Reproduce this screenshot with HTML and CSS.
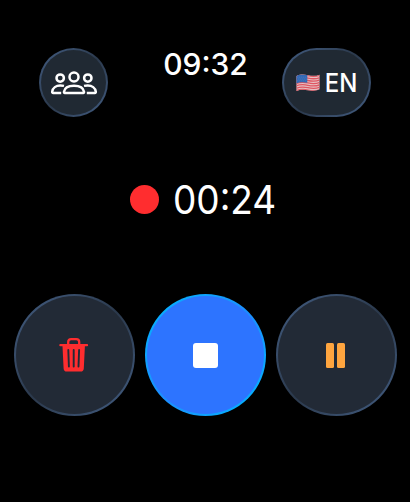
FILE: index.html
```
<!DOCTYPE html>
<html lang="en">
<head>
  <meta charset="UTF-8">
  <meta name="viewport" content="width=device-width, initial-scale=1.0">
  <title>Recorder</title>
  <link rel="stylesheet" href="styles.css">
</head>
<body>
  <div class="watch">
    <header class="top-bar">
      <button class="btn btn-speakers" aria-label="Speakers">
        <svg width="48" height="24" viewBox="0 0 48 24" fill="none" stroke="#fff" stroke-width="2.5" stroke-linejoin="round">
          <circle cx="24" cy="6" r="4.500"/>
          <path d="M14.800 22c-.7 0-.9-.5-.8-1.200.6-4 4.400-6 10-6s9.400 2 10 6c.1.700-.1 1.200-.8 1.200z"/>
          <circle cx="10.200" cy="7.100" r="3.700"/>
          <circle cx="37.800" cy="7.100" r="3.700"/>
          <path d="M14 14.900c-1.200-.3-2.500-.4-3.800-.4-4.200 0-7.400 2.400-8 6.100-.1.900.2 1.400 1 1.400h8"/>
          <path d="M34 14.900c1.200-.3 2.500-.4 3.800-.4 4.200 0 7.400 2.400 8 6.100.1.900-.2 1.400-1 1.400h-8"/>
        </svg>
      </button>
      <div class="clock">09:32</div>
      <button class="btn btn-lang">
        <svg class="flag" width="24" height="18" viewBox="0 0 24 18">
          <defs>
            <clipPath id="wave">
              <path d="M.5 2C4 .2 8 .3 12 1.200s8 1 11.500-.5v14.600c-3.500 1.700-7.500 1.600-11.500.9S4 15.300.5 17z"/>
            </clipPath>
          </defs>
          <g clip-path="url(#wave)">
            <rect width="24" height="18" fill="#e8bfc3"/>
            <g fill="none" stroke="#df5762" stroke-width="1.300">
              <path d="M0 2.400C4 .700 8 .800 12 1.700s8 1 12-.6"/>
              <path d="M0 4.800c4-1.700 8-1.600 12-.7s8 1 12-.6"/>
              <path d="M0 7.200c4-1.700 8-1.600 12-.7s8 1 12-.6"/>
              <path d="M0 9.600c4-1.700 8-1.600 12-.7s8 1 12-.6"/>
              <path d="M0 12c4-1.700 8-1.600 12-.7s8 1 12-.6"/>
              <path d="M0 14.400c4-1.700 8-1.600 12-.7s8 1 12-.6"/>
              <path d="M0 16.800c4-1.700 8-1.600 12-.7s8 1 12-.6"/>
            </g>
            <path d="M0 1.500C4 0 8 .200 11.300 1v7.800C8 8 4 7.900 0 9.500z" fill="#3268b4"/>
            <g stroke="#6f97cf" stroke-width=".6" stroke-dasharray=".7 1.300">
              <path d="M1.500 3.200h9.500M2.500 5h8.500M1.500 6.800h9.500"/>
            </g>
          </g>
        </svg>
        <span class="lang-code">EN</span>
      </button>
    </header>

    <div class="timer">
      <span class="rec-dot"></span>
      <span class="elapsed">00:24</span>
    </div>

    <div class="controls">
      <button class="btn btn-round" aria-label="Delete">
        <svg class="trash" width="30" height="36" viewBox="0 0 30 36">
          <path d="M9.200 8V5c0-1.900 1-2.900 2.900-2.900h5.200c1.900 0 2.900 1 2.900 2.900v3" fill="none" stroke="#ff2d2f" stroke-width="2.300"/>
          <path d="M1.300 7.100h26.800a1 1 0 0 1 0 2.100h-2.200l-1.100 22.300c-.1 2.100-1.200 3.100-3.200 3.100H7.800c-2 0-3.100-1-3.200-3.100L3.500 9.200H1.300a1 1 0 0 1 0-2.100z" fill="#ff2d2f"/>
          <path d="M9.300 13l.6 16.500M14.700 13v16.500M20.100 13l-.6 16.500" fill="none" stroke="#222a36" stroke-width="1.900" stroke-linecap="round"/>
        </svg>
      </button>
      <button class="btn btn-round btn-stop" aria-label="Stop">
        <span class="stop-icon"></span>
      </button>
      <button class="btn btn-round" aria-label="Pause">
        <span class="pause-icon"></span>
      </button>
    </div>
  </div>
</body>
</html>
```
FILE: styles.css
```
* {
  box-sizing: border-box;
}
body {
  margin: 0;
  background: #000;
  color: #fff;
  font-family: Inter, "Liberation Sans", sans-serif;
}
.watch {
  width: 410px;
  height: 502px;
  padding: 48px 14px 0;
  overflow: hidden;
}
.top-bar {
  display: flex;
  justify-content: space-between;
  height: 69px;
  padding: 0 25px;
}
.btn {
  display: flex;
  align-items: center;
  justify-content: center;
  padding: 0;
  border: 2px solid transparent;
  color: #fff;
  font-family: inherit;
  background:
    linear-gradient(#202933, #202933) padding-box,
    linear-gradient(135deg, #3c5373 15%, #2b394c 50%, #3c5373 85%) border-box;
}
.btn-speakers {
  width: 69px;
  height: 69px;
  border-radius: 50%;
}
.btn-lang {
  gap: 4px;
  width: 89px;
  height: 69px;
  border-radius: 35px;
  font-size: 25px;
  font-weight: 500;
}
.flag {
  margin-left: 1px;
}
.lang-code {
  padding-top: 1px;
  transform: scaleX(0.96);
}
.clock {
  margin-left: 29px;
  margin-right: 8px;
  font-size: 30px;
  font-weight: 500;
  line-height: 32px;
}
.timer {
  display: flex;
  align-items: center;
  gap: 14px;
  height: 50px;
  margin-top: 57px;
  padding-left: 116px;
}
.rec-dot {
  width: 29px;
  height: 29px;
  border-radius: 50%;
  background: #ff2d2f;
}
.elapsed {
  font-size: 40px;
  transform: scaleX(0.925);
  transform-origin: left;
}
.controls {
  display: flex;
  gap: 9.75px;
  margin-top: 70px;
}
.btn-round {
  flex: none;
  width: 121px;
  height: 121.5px;
  border-radius: 50%;
  background:
    linear-gradient(#222a36, #222a36) padding-box,
    linear-gradient(135deg, #3c5373 15%, #2b394c 50%, #3c5373 85%) border-box;
}
.btn-stop {
  background:
    linear-gradient(#2d74ff, #2d74ff) padding-box,
    linear-gradient(135deg, #08acff 15%, #1c8eff 50%, #08acff 85%) border-box;
}
.trash {
  margin-right: 1px;
}
.stop-icon {
  width: 25px;
  height: 25px;
  margin-top: 1px;
  border-radius: 3px;
  background: #fff;
}
.pause-icon {
  width: 19px;
  height: 25px;
  margin-top: 1px;
  margin-right: 1px;
  display: flex;
  justify-content: space-between;
}
.pause-icon::before,
.pause-icon::after {
  content: "";
  width: 8px;
  border-radius: 1.5px;
  background: #ffa53f;
}
```
